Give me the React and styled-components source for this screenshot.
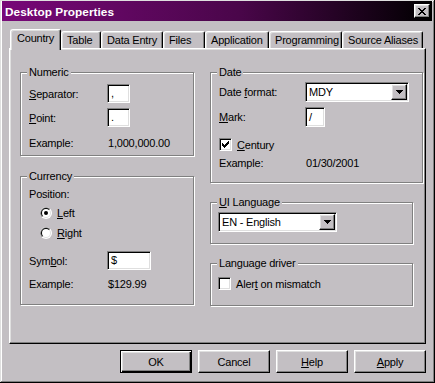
import React from 'react';
import styled, { createGlobalStyle } from 'styled-components';

const FACE = '#c3bfc3';

const Global = createGlobalStyle`
  html, body { margin: 0; padding: 0; background: ${FACE}; overflow: hidden; }
  body { font-family: "Liberation Sans", Arial, sans-serif; font-size: 11px; letter-spacing: -0.2px; color: #000; }
  *, *::before, *::after { box-sizing: border-box; }
  u { text-decoration: underline; text-underline-offset: 1px; }
`;

const Window = styled.div`
  width: 435px;
  height: 383px;
  background: ${FACE};
  padding: 1px 3px 3px 2px;
  box-shadow: inset -1px -1px 0 #000, inset 1px 1px 0 #dfdfdf,
    inset -2px -2px 0 #808080, inset 2px 2px 0 #fff;
  display: flex;
  flex-direction: column;
`;

const TitleBar = styled.div`
  height: 20px;
  background: linear-gradient(to right, #780878 0%, #4a064a 55%, #000 100%);
  display: flex;
  align-items: center;
  justify-content: space-between;
  padding: 1px 2px 0 3px;
`;

const TitleText = styled.span`
  color: #fff;
  font-weight: bold;
  font-size: 11.8px;
  letter-spacing: 0.05px;
`;

const RaisedButton = styled.button`
  font: inherit;
  letter-spacing: inherit;
  color: #000;
  background: ${FACE};
  padding: 0;
  margin: 0;
  border: 1px solid;
  border-color: #fff #000 #000 #fff;
  box-shadow: inset -1px -1px 0 #808080, inset 1px 1px 0 #dfdfdf;
  display: flex;
  align-items: center;
  justify-content: center;
`;

const CloseButton = styled(RaisedButton)`
  width: 16px;
  height: 14px;
  margin-top: -1px;
`;

const Body = styled.div`
  flex: 1;
  display: flex;
  flex-direction: column;
  padding: 8px 6px 0 7px;
`;

const TabRow = styled.div`
  display: flex;
  align-items: flex-start;
  height: 21px;
  margin-bottom: -2px;
  padding-left: 1px;
  position: relative;
  z-index: 2;
`;

const Tab = styled.div`
  width: ${p => p.$w}px;
  height: ${p => (p.$active ? 21 : 17)}px;
  margin-top: ${p => (p.$active ? 0 : 2)}px;
  padding: 2px 0 0 ${p => (p.$active ? 6 : 5)}px;
  line-height: 13px;
  white-space: nowrap;
  overflow: hidden;
  background: ${FACE};
  border-left: 1px solid #fff;
  border-top: 1px solid #fff;
  border-right: 1px solid #000;
  border-top-left-radius: 3px;
  border-top-right-radius: 2px;
  box-shadow: inset -1px 0 0 #808080, inset 1px 1px 0 #dfdfdf;
`;

const Panel = styled.div`
  height: 296px;
  position: relative;
  z-index: 1;
  background: ${FACE};
  border: 1px solid;
  border-color: #fff #000 #000 #fff;
  box-shadow: inset -1px -1px 0 #808080, inset 1px 1px 0 #dfdfdf;
  padding: 23px 0 0 10px;
  display: grid;
  grid-template-columns: 174px 213px;
  column-gap: 16px;
  align-items: start;
`;

const Column = styled.div`
  display: flex;
  flex-direction: column;
  gap: ${p => p.$gap}px;
`;

const Group = styled.div`
  position: relative;
  width: ${p => p.$w}px;
  height: ${p => p.$h}px;
  border: 1px solid #808080;
  box-shadow: 1px 1px 0 #fff, inset 1px 1px 0 #fff;
  padding: ${p => p.$pt}px 0 0 ${p => p.$pl}px;
  display: flex;
  flex-direction: column;
`;

const Legend = styled.span`
  position: absolute;
  top: -7px;
  left: 6px;
  padding: 0 2px;
  line-height: 13px;
  background: ${FACE};
  white-space: nowrap;
`;

const Row = styled.div`
  display: flex;
  align-items: center;
  height: ${p => p.$h}px;
  margin-top: ${p => p.$mt || 0}px;
  padding-left: ${p => p.$pl || 0}px;
  white-space: nowrap;
`;

const Label = styled.span`
  width: ${p => p.$w}px;
  flex: none;
`;

const Value = styled.span`
  padding-left: 1px;
`;

const Field = styled.div`
  width: ${p => p.$w}px;
  height: ${p => p.$h}px;
  background: #fff;
  border: 1px solid;
  border-color: #808080 #fff #fff #808080;
  box-shadow: inset 1px 1px 0 #000, inset -1px -1px 0 #dfdfdf;
  display: flex;
  align-items: center;
  padding: 0 2px 0 3px;
  flex: none;
`;

const FieldText = styled.span`
  flex: 1;
  line-height: 13px;
`;

const DropButton = styled(RaisedButton)`
  width: 16px;
  height: 16px;
  flex: none;
  margin-right: -1px;
`;

const CheckBox = styled.span`
  width: 13px;
  height: 13px;
  flex: none;
  background: #fff;
  border: 1px solid;
  border-color: #808080 #fff #fff #808080;
  box-shadow: inset 1px 1px 0 #000, inset -1px -1px 0 #dfdfdf;
  display: flex;
  align-items: center;
  justify-content: center;
`;

const OptionLabel = styled.span`
  margin-left: 5px;
`;

const ButtonRow = styled.div`
  display: flex;
  justify-content: flex-end;
  gap: 6px;
  margin-top: 6px;
`;

const DialogButton = styled(RaisedButton)`
  width: 72px;
  height: 23px;
  ${p =>
    p.$default &&
    `
    border: 1px solid #000;
    box-shadow: inset 1px 1px 0 #fff, inset -1px -1px 0 #000, inset -2px -2px 0 #808080, inset 2px 2px 0 #dfdfdf;
  `}
`;

const Pixels = ({ w, h, rects }) => (
  <svg width={w} height={h} viewBox={`0 0 ${w} ${h}`} shapeRendering="crispEdges">
    {rects.map(([x, y, rw, rh], i) => (
      <rect key={i} x={x} y={y} width={rw} height={rh} fill="#000" />
    ))}
  </svg>
);

const CloseGlyph = () => (
  <Pixels
    w={8}
    h={7}
    rects={[
      [0, 0, 2, 1], [6, 0, 2, 1],
      [1, 1, 2, 1], [5, 1, 2, 1],
      [2, 2, 4, 1],
      [3, 3, 2, 1],
      [2, 4, 4, 1],
      [1, 5, 2, 1], [5, 5, 2, 1],
      [0, 6, 2, 1], [6, 6, 2, 1],
    ]}
  />
);

const Arrow = () => (
  <Pixels w={7} h={4} rects={[[0, 0, 7, 1], [1, 1, 5, 1], [2, 2, 3, 1], [3, 3, 1, 1]]} />
);

const CheckGlyph = () => (
  <Pixels
    w={7}
    h={7}
    rects={[[0, 2, 1, 3], [1, 3, 1, 3], [2, 4, 1, 3], [3, 3, 1, 3], [4, 2, 1, 3], [5, 1, 1, 3], [6, 0, 1, 3]]}
  />
);

const Radio = ({ checked }) => (
  <svg width="12" height="12" viewBox="0 0 12 12" style={{ flex: 'none' }}>
    <circle cx="6" cy="6" r="6" fill="#fff" />
    <path d="M1.76 10.24 A6 6 0 0 1 10.24 1.76 Z" fill="#808080" />
    <circle cx="6" cy="6" r="5" fill="#dfdfdf" />
    <path d="M2.46 9.54 A5 5 0 0 1 9.54 2.46 Z" fill="#000" />
    <circle cx="6" cy="6" r="4" fill="#fff" />
    {checked && <circle cx="6" cy="6" r="2" fill="#000" />}
  </svg>
);

const Select = ({ w, value }) => (
  <Field $w={w} $h={20}>
    <FieldText>{value}</FieldText>
    <DropButton tabIndex={-1}>
      <Arrow />
    </DropButton>
  </Field>
);

const tabs = [
  { name: 'Country', w: 51, active: true },
  { name: 'Table', w: 40 },
  { name: 'Data Entry', w: 62 },
  { name: 'Files', w: 42 },
  { name: 'Application', w: 64 },
  { name: 'Programming', w: 73 },
  { name: 'Source Aliases', w: 81 },
];

export default function App() {
  return (
    <>
      <Global />
      <Window>
        <TitleBar>
          <TitleText>Desktop Properties</TitleText>
          <CloseButton tabIndex={-1}>
            <CloseGlyph />
          </CloseButton>
        </TitleBar>
        <Body>
          <TabRow>
            {tabs.map(t => (
              <Tab key={t.name} $w={t.w} $active={t.active}>
                {t.name}
              </Tab>
            ))}
          </TabRow>
          <Panel>
            <Column $gap={20}>
              <Group $w={174} $h={84} $pt={11} $pl={8}>
                <Legend>Numeric</Legend>
                <Row $h={19}>
                  <Label $w={78}><u>S</u>eparator:</Label>
                  <Field $w={23} $h={19}><FieldText>,</FieldText></Field>
                </Row>
                <Row $h={19} $mt={5}>
                  <Label $w={78}><u>P</u>oint:</Label>
                  <Field $w={23} $h={19}><FieldText>.</FieldText></Field>
                </Row>
                <Row $h={16} $mt={8}>
                  <Label $w={78}>Example:</Label>
                  <Value>1,000,000.00</Value>
                </Row>
              </Group>
              <Group $w={174} $h={129} $pt={9} $pl={8}>
                <Legend>Currency</Legend>
                <Row $h={16}>Position:</Row>
                <Row $h={16} $mt={3} $pl={11}>
                  <Radio checked />
                  <OptionLabel><u>L</u>eft</OptionLabel>
                </Row>
                <Row $h={16} $mt={4} $pl={11}>
                  <Radio />
                  <OptionLabel><u>R</u>ight</OptionLabel>
                </Row>
                <Row $h={19} $mt={10}>
                  <Label $w={78}>Sym<u>b</u>ol:</Label>
                  <Field $w={44} $h={19}><FieldText>$</FieldText></Field>
                </Row>
                <Row $h={16} $mt={6}>
                  <Label $w={78}>Example:</Label>
                  <Value>$129.99</Value>
                </Row>
              </Group>
            </Column>
            <Column $gap={19}>
              <Group $w={213} $h={111} $pt={9} $pl={8}>
                <Legend>Date</Legend>
                <Row $h={20}>
                  <Label $w={86}>Date <u>f</u>ormat:</Label>
                  <Select w={104} value="MDY" />
                </Row>
                <Row $h={20} $mt={5}>
                  <Label $w={86}><u>M</u>ark:</Label>
                  <Field $w={20} $h={20}><FieldText>/</FieldText></Field>
                </Row>
                <Row $h={13} $mt={11}>
                  <CheckBox><CheckGlyph /></CheckBox>
                  <OptionLabel><u>C</u>entury</OptionLabel>
                </Row>
                <Row $h={16} $mt={4}>
                  <Label $w={86}>Example:</Label>
                  <Value>01/30/2001</Value>
                </Row>
              </Group>
              <Group $w={203} $h={42} $pt={9} $pl={7}>
                <Legend><u>U</u>I Language</Legend>
                <Row $h={20}>
                  <Select w={119} value="EN - English" />
                </Row>
              </Group>
              <Group $w={203} $h={43} $pt={13} $pl={7}>
                <Legend>Language driver</Legend>
                <Row $h={13}>
                  <CheckBox />
                  <OptionLabel>Aler<u>t</u> on mismatch</OptionLabel>
                </Row>
              </Group>
            </Column>
          </Panel>
          <ButtonRow>
            <DialogButton $default>OK</DialogButton>
            <DialogButton>Cancel</DialogButton>
            <DialogButton><span><u>H</u>elp</span></DialogButton>
            <DialogButton><span><u>A</u>pply</span></DialogButton>
          </ButtonRow>
        </Body>
      </Window>
    </>
  );
}
